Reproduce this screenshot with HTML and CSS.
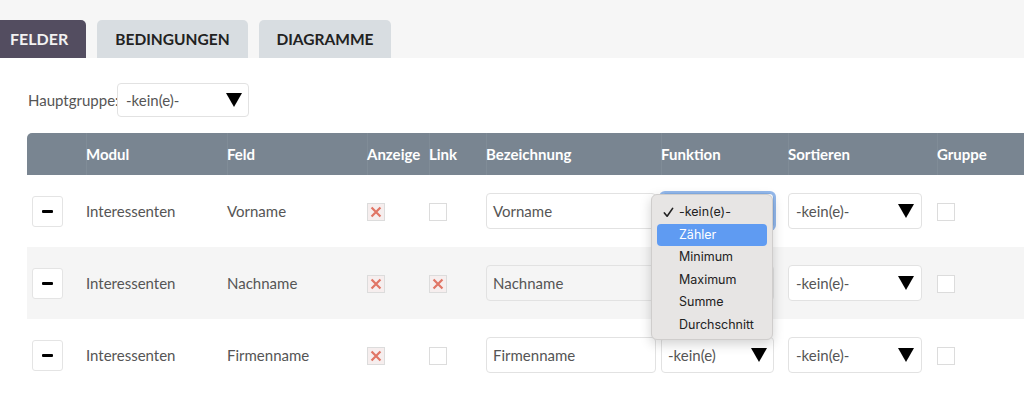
FILE: index.html
```html
<!DOCTYPE html>
<html lang="de">
<head>
<meta charset="utf-8">
<title>Felder</title>
<link rel="stylesheet" href="styles.css">
</head>
<body>
<div class="tabbar">
  <div class="tab active">FELDER</div>
  <div class="tab t2">BEDINGUNGEN</div>
  <div class="tab t3">DIAGRAMME</div>
</div>
<div class="content">
  <div class="maingroup">
    <span class="label">Hauptgruppe:</span>
    <div class="select sel-main"><span>-kein(e)-</span><svg class="tri" viewBox="0 0 16 14"><polygon points="0,0 16,0 8,14"/></svg></div>
  </div>
  <div class="grid">
    <div class="row head">
      <div class="cell"></div>
      <div class="cell sep">Modul</div>
      <div class="cell sep">Feld</div>
      <div class="cell sep">Anzeige</div>
      <div class="cell sep">Link</div>
      <div class="cell sep">Bezeichnung</div>
      <div class="cell sep">Funktion</div>
      <div class="cell sep">Sortieren</div>
      <div class="cell sep">Gruppe</div>
    </div>

    <div class="row">
      <div class="cell"><div class="minus"><i></i></div></div>
      <div class="cell">Interessenten</div>
      <div class="cell">Vorname</div>
      <div class="cell"><div class="cb checked"><svg viewBox="0 0 18 18"><path d="M4 4 L14 14 M14 4 L4 14"/></svg></div></div>
      <div class="cell"><div class="cb"></div></div>
      <div class="cell"><div class="input">Vorname</div></div>
      <div class="cell fn">
        <div class="select sel-fn focus"></div>
        <div class="menu">
          <div class="opt"><svg class="chk" viewBox="0 0 12 12"><path d="M1.5 6.5 L4.5 10 L10.5 1.5"/></svg>-kein(e)-</div>
          <div class="opt hl">Zähler</div>
          <div class="opt">Minimum</div>
          <div class="opt">Maximum</div>
          <div class="opt">Summe</div>
          <div class="opt">Durchschnitt</div>
        </div>
      </div>
      <div class="cell"><div class="select sel-sort"><span>-kein(e)-</span><svg class="tri" viewBox="0 0 16 14"><polygon points="0,0 16,0 8,14"/></svg></div></div>
      <div class="cell"><div class="cb"></div></div>
    </div>

    <div class="row alt">
      <div class="cell"><div class="minus"><i></i></div></div>
      <div class="cell">Interessenten</div>
      <div class="cell">Nachname</div>
      <div class="cell"><div class="cb checked"><svg viewBox="0 0 18 18"><path d="M4 4 L14 14 M14 4 L4 14"/></svg></div></div>
      <div class="cell"><div class="cb checked"><svg viewBox="0 0 18 18"><path d="M4 4 L14 14 M14 4 L4 14"/></svg></div></div>
      <div class="cell"><div class="input gray">Nachname</div></div>
      <div class="cell"><div class="select sel-fn"></div></div>
      <div class="cell"><div class="select sel-sort"><span>-kein(e)-</span><svg class="tri" viewBox="0 0 16 14"><polygon points="0,0 16,0 8,14"/></svg></div></div>
      <div class="cell"><div class="cb"></div></div>
    </div>

    <div class="row">
      <div class="cell"><div class="minus"><i></i></div></div>
      <div class="cell">Interessenten</div>
      <div class="cell">Firmenname</div>
      <div class="cell"><div class="cb checked"><svg viewBox="0 0 18 18"><path d="M4 4 L14 14 M14 4 L4 14"/></svg></div></div>
      <div class="cell"><div class="cb"></div></div>
      <div class="cell"><div class="input">Firmenname</div></div>
      <div class="cell"><div class="select sel-fn"><span>-kein(e)</span><svg class="tri" viewBox="0 0 16 14"><polygon points="0,0 16,0 8,14"/></svg></div></div>
      <div class="cell"><div class="select sel-sort"><span>-kein(e)-</span><svg class="tri" viewBox="0 0 16 14"><polygon points="0,0 16,0 8,14"/></svg></div></div>
      <div class="cell"><div class="cb"></div></div>
    </div>
  </div>
</div>
</body>
</html>
```

FILE: styles.css
```css
* { box-sizing: border-box; }
body {
  margin: 0;
  font-family: Lato, "Open Sans", sans-serif;
  font-size: 15px;
  color: #555;
  background: #fff;
  width: 1024px;
  height: 419px;
  overflow: hidden;
}
.tabbar {
  background: #f6f6f6;
  height: 58px;
  padding-top: 20px;
  display: flex;
  gap: 11px;
}
.tab {
  height: 38px;
  background: #d8dde1;
  color: #222;
  font-weight: 700;
  font-size: 15.5px;
  line-height: 38px;
  text-align: center;
  border-radius: 5px 5px 0 0;
}
.t2 { width: 151px; }
.t3 { width: 132px; }
.tab.active {
  width: 86px;
  background: #534d60;
  color: #f2f2f2;
  font-size: 16px;
  text-align: left;
  padding-left: 10px;
  border-radius: 0 5px 0 0;
}
.content {
  padding: 25px 0 0 27px;
}
.maingroup {
  display: flex;
  align-items: center;
  height: 34px;
  margin-left: 1px;
}
.label { width: 89px; white-space: nowrap; }
.select {
  position: relative;
  display: flex;
  align-items: center;
  justify-content: space-between;
  background: #fff;
  border: 1px solid #e2e2e2;
  border-radius: 4px;
  color: #555;
}
.tri { width: 16px; height: 14px; fill: #000; }
.sel-main { width: 132px; height: 34px; padding: 0 6px 0 8px; }
.grid { margin-top: 16px; }
.row {
  display: grid;
  grid-template-columns: 59px 141px 140px 62px 57px 175px 127px 149px 1fr;
  height: 72px;
  align-items: center;
  background: #fff;
}
.row.alt { background: #f5f5f5; }
.row.head {
  height: 42px;
  background: #798591;
  color: #fff;
  font-weight: 700;
  border-radius: 5px 0 0 0;
}
.head .cell { height: 100%; display: flex; align-items: center; }
.head .sep { box-shadow: inset 1px 0 0 rgba(255,255,255,0.06); }
.cell { position: relative; white-space: nowrap; }
.minus {
  margin-left: 5px;
  width: 31px;
  height: 31px;
  border: 1px solid #e4e4e4;
  border-radius: 3px;
  background: #fff;
  display: flex;
  align-items: center;
  justify-content: center;
}
.minus i { display: block; width: 11px; height: 3px; background: #000; border-radius: 1px; }
.cb {
  width: 18px;
  height: 18px;
  border: 1px solid #dcdcdc;
  background: #fff;
  margin-top: 2px;
}
.cb.checked { background: #f6eeee; }
.cb svg { display: block; width: 16px; height: 16px; }
.cb path { stroke: #e07565; stroke-width: 2.5; fill: none; }
.input {
  width: 170px;
  height: 36px;
  border: 1px solid #e2e2e2;
  border-radius: 4px;
  background: #fff;
  padding-left: 6px;
  line-height: 34px;
}
.input.gray { background: #f5f5f5; }
.sel-fn { width: 113px; height: 36px; padding: 0 6px 0 6px; }
.sel-sort { width: 134px; height: 36px; padding: 0 7px 0 7px; }
.sel-fn.focus { border: 1px solid #84aee6; box-shadow: 0 0 0 2px #94b9ec; }
.menu {
  position: absolute;
  left: -10px;
  top: 1px;
  width: 122px;
  height: 146px;
  background: #e7e5e4;
  border: 1px solid #cfcdcc;
  border-radius: 6px;
  box-shadow: 0 4px 12px rgba(0,0,0,0.18);
  padding: 6px 5px;
  font-family: Inter, "Liberation Sans", sans-serif;
  font-size: 12.5px;
  color: #222;
  z-index: 2;
}
.opt {
  height: 22.5px;
  line-height: 22.5px;
  padding-left: 22px;
  position: relative;
  border-radius: 4px;
  width: 110px;
}
.opt.hl { background: #5f9bf2; color: #fff; }
.chk { position: absolute; left: 6px; top: 6px; width: 11px; height: 11px; }
.chk path { stroke: #222; stroke-width: 1.8; fill: none; stroke-linecap: round; stroke-linejoin: round; }
```
